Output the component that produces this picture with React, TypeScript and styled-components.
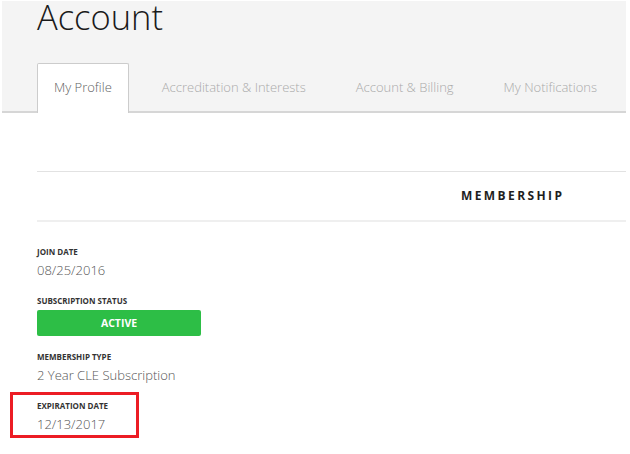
import React from 'react';
import styled, {createGlobalStyle} from 'styled-components';

const GlobalStyle = createGlobalStyle`
	html, body {
		margin: 0;
		padding: 0;
		background: #ffffff;
	}
	body {
		font-family: 'Open Sans', 'Liberation Sans', sans-serif;
		overflow: hidden;
	}
`;

const tabs = ['My Profile', 'Accreditation & Interests', 'Account & Billing', 'My Notifications'];

const fields = [
	{label: 'Join Date', value: '08/25/2016'},
	{label: 'Subscription Status', status: 'Active'},
	{label: 'Membership Type', value: '2 Year CLE Subscription'},
	{label: 'Expiration Date', value: '12/13/2017', highlighted: true}
];

export default function App() {
	return (
		<>
			<GlobalStyle />
			<Page>
				<Header>
					<Title>Account</Title>
					<TabBar>
						{tabs.map((tab, i) => (
							<Tab key={tab} $active={i === 0}>
								{tab}
							</Tab>
						))}
					</TabBar>
				</Header>
				<Content>
					<SectionHeader>
						<SectionTitle>Membership</SectionTitle>
					</SectionHeader>
					<FieldList>
						{fields.map((field) => (
							<Field key={field.label} $highlighted={field.highlighted}>
								<FieldLabel>{field.label}</FieldLabel>
								{field.status ? (
									<StatusBadge>{field.status}</StatusBadge>
								) : (
									<FieldValue>{field.value}</FieldValue>
								)}
							</Field>
						))}
					</FieldList>
				</Content>
			</Page>
		</>
	);
}

const Page = styled.div`
	display: flex;
	flex-direction: column;
	width: 630px;
	height: 454px;
	padding: 1px 4px 0 2px;
	box-sizing: border-box;
	background: #ffffff;
`;

const Header = styled.div`
	display: flex;
	flex-direction: column;
	background: #f4f4f4;
	padding-left: 35px;
	border-bottom: 2px solid #d6d6d6;
`;

const Title = styled.h1`
	margin: 0 0 32px;
	padding-top: 2px;
	font-size: 34.5px;
	line-height: 28px;
	font-weight: 300;
	color: #1a1a1a;
`;

const TabBar = styled.div`
	display: flex;
	gap: 16px;
	margin-bottom: -2px;
`;

interface ITab {
	$active?: boolean;
}

const Tab = styled.div<ITab>`
	padding: 13px 16px 16px;
	font-size: 13px;
	line-height: 20px;
	font-weight: 300;
	white-space: nowrap;
	border: 1px solid ${(props) => (props.$active ? '#cccccc' : 'transparent')};
	border-bottom: none;
	border-radius: 2px 2px 0 0;
	background: ${(props) => (props.$active ? '#ffffff' : 'transparent')};
	color: ${(props) => (props.$active ? '#5f5f5f' : '#aaaaaa')};
`;

const Content = styled.div`
	display: flex;
	flex-direction: column;
	margin: 58px 0 0 35px;
`;

const SectionHeader = styled.div`
	display: flex;
	align-items: center;
	height: 48px;
	padding-left: 424px;
	border-top: 1px solid #e2e2e2;
	border-bottom: 2px solid #efefef;
`;

const SectionTitle = styled.h2`
	margin: 0;
	font-size: 12px;
	line-height: 16px;
	font-weight: 700;
	letter-spacing: 2.4px;
	text-transform: uppercase;
	color: #1e1e1e;
`;

const FieldList = styled.div`
	display: flex;
	flex-direction: column;
	align-items: flex-start;
	gap: 15px;
	padding-top: 24px;
`;

interface IField {
	$highlighted?: boolean;
}

const Field = styled.div<IField>`
	display: flex;
	flex-direction: column;
	align-items: flex-start;
	${(props) =>
		props.$highlighted &&
		`
		box-sizing: border-box;
		width: 129px;
		margin: -8px 0 0 -27px;
		padding: 5px 0 1px 24px;
		border: 3px solid #ec1c24;
	`}
`;

const FieldLabel = styled.div`
	font-size: 8px;
	line-height: 12px;
	font-weight: 700;
	text-transform: uppercase;
	color: #333333;
	margin-bottom: 2px;
`;

const FieldValue = styled.div`
	font-size: 13px;
	line-height: 20px;
	font-weight: 300;
	color: #555555;
`;

const StatusBadge = styled.div`
	display: flex;
	align-items: center;
	justify-content: center;
	width: 164px;
	height: 26px;
	margin-top: 1px;
	border-radius: 2px;
	background: #2dbe46;
	font-size: 10.5px;
	font-weight: 700;
	text-transform: uppercase;
	color: #ffffff;
`;
